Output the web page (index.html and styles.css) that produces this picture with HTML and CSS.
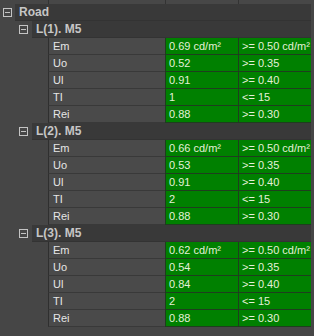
FILE: index.html
```html
<!DOCTYPE html>
<html>
<head>
<meta charset="utf-8">
<link rel="stylesheet" href="styles.css">
</head>
<body>
<div class="grid">
  <div class="top"><div></div><div></div><div></div><div></div></div>

  <div class="cat lvl1"><div class="gut"><span class="toggle"></span></div><div class="band">Road</div></div>

  <div class="cat lvl2"><div class="gut"><span class="toggle"></span></div><div class="band">L(1). M5</div></div>
  <div class="prop"><div class="name">Em</div><div class="val">0.69 cd/m²</div><div class="val">&gt;= 0.50 cd/m²</div></div>
  <div class="prop"><div class="name">Uo</div><div class="val">0.52</div><div class="val">&gt;= 0.35</div></div>
  <div class="prop"><div class="name">Ul</div><div class="val">0.91</div><div class="val">&gt;= 0.40</div></div>
  <div class="prop"><div class="name">TI</div><div class="val">1</div><div class="val">&lt;= 15</div></div>
  <div class="prop"><div class="name">Rei</div><div class="val">0.88</div><div class="val">&gt;= 0.30</div></div>

  <div class="cat lvl2"><div class="gut"><span class="toggle"></span></div><div class="band">L(2). M5</div></div>
  <div class="prop"><div class="name">Em</div><div class="val">0.66 cd/m²</div><div class="val">&gt;= 0.50 cd/m²</div></div>
  <div class="prop"><div class="name">Uo</div><div class="val">0.53</div><div class="val">&gt;= 0.35</div></div>
  <div class="prop"><div class="name">Ul</div><div class="val">0.91</div><div class="val">&gt;= 0.40</div></div>
  <div class="prop"><div class="name">TI</div><div class="val">2</div><div class="val">&lt;= 15</div></div>
  <div class="prop"><div class="name">Rei</div><div class="val">0.88</div><div class="val">&gt;= 0.30</div></div>

  <div class="cat lvl2"><div class="gut"><span class="toggle"></span></div><div class="band">L(3). M5</div></div>
  <div class="prop"><div class="name">Em</div><div class="val">0.62 cd/m²</div><div class="val">&gt;= 0.50 cd/m²</div></div>
  <div class="prop"><div class="name">Uo</div><div class="val">0.54</div><div class="val">&gt;= 0.35</div></div>
  <div class="prop"><div class="name">Ul</div><div class="val">0.84</div><div class="val">&gt;= 0.40</div></div>
  <div class="prop"><div class="name">TI</div><div class="val">2</div><div class="val">&lt;= 15</div></div>
  <div class="prop"><div class="name">Rei</div><div class="val">0.88</div><div class="val">&gt;= 0.30</div></div>
</div>
</body>
</html>
```

FILE: styles.css
```css
html, body {
  margin: 0;
  padding: 0;
}
body {
  background: #464646;
  width: 314px;
  height: 336px;
  overflow: hidden;
  font-family: "Liberation Sans", Arial, sans-serif;
  font-size: 11px;
}
.grid {
  display: flex;
  flex-direction: column;
  width: 311px;
}
.top {
  height: 4px;
  display: grid;
  grid-template-columns: 48px 117px 73px 73px;
}
.top > div {
  background: #474747;
  border-left: 1px solid #333;
}
.top > div:first-child {
  border-left: none;
  background: #464646;
}
.cat {
  display: flex;
  height: 17px;
}
.gut {
  display: flex;
  align-items: center;
}
.lvl1 .gut { width: 15px; }
.lvl2 .gut { width: 32px; }
.toggle {
  box-sizing: border-box;
  width: 9px;
  height: 9px;
  border: 1px solid #c4c4c4;
  display: flex;
  align-items: center;
  justify-content: center;
}
.toggle::after {
  content: "";
  width: 5px;
  height: 1px;
  background: #c4c4c4;
}
.lvl1 .toggle { margin-left: 3px; }
.lvl2 .toggle { margin-left: 19px; }
.band {
  flex: 1;
  background: #393939;
  border-bottom: 1px solid #333;
  color: #c6c6c6;
  font-weight: bold;
  font-size: 12px;
  line-height: 16px;
  padding-left: 4px;
}
.prop {
  display: grid;
  grid-template-columns: 117px 73px 73px;
  margin-left: 48px;
  height: 17px;
}
.prop > div {
  border-left: 1px solid #2f2f2f;
  border-bottom: 1px solid #393939;
  line-height: 16px;
  white-space: nowrap;
  overflow: hidden;
}
.name {
  background: #4a4a4a;
  color: #e6e6e6;
  padding-left: 4px;
}
.prop > .val {
  background: #008000;
  color: #e4f0d8;
  padding-left: 3px;
  border-bottom-color: #1e3e1e;
  border-left-color: #1e3e1e;
}
```
